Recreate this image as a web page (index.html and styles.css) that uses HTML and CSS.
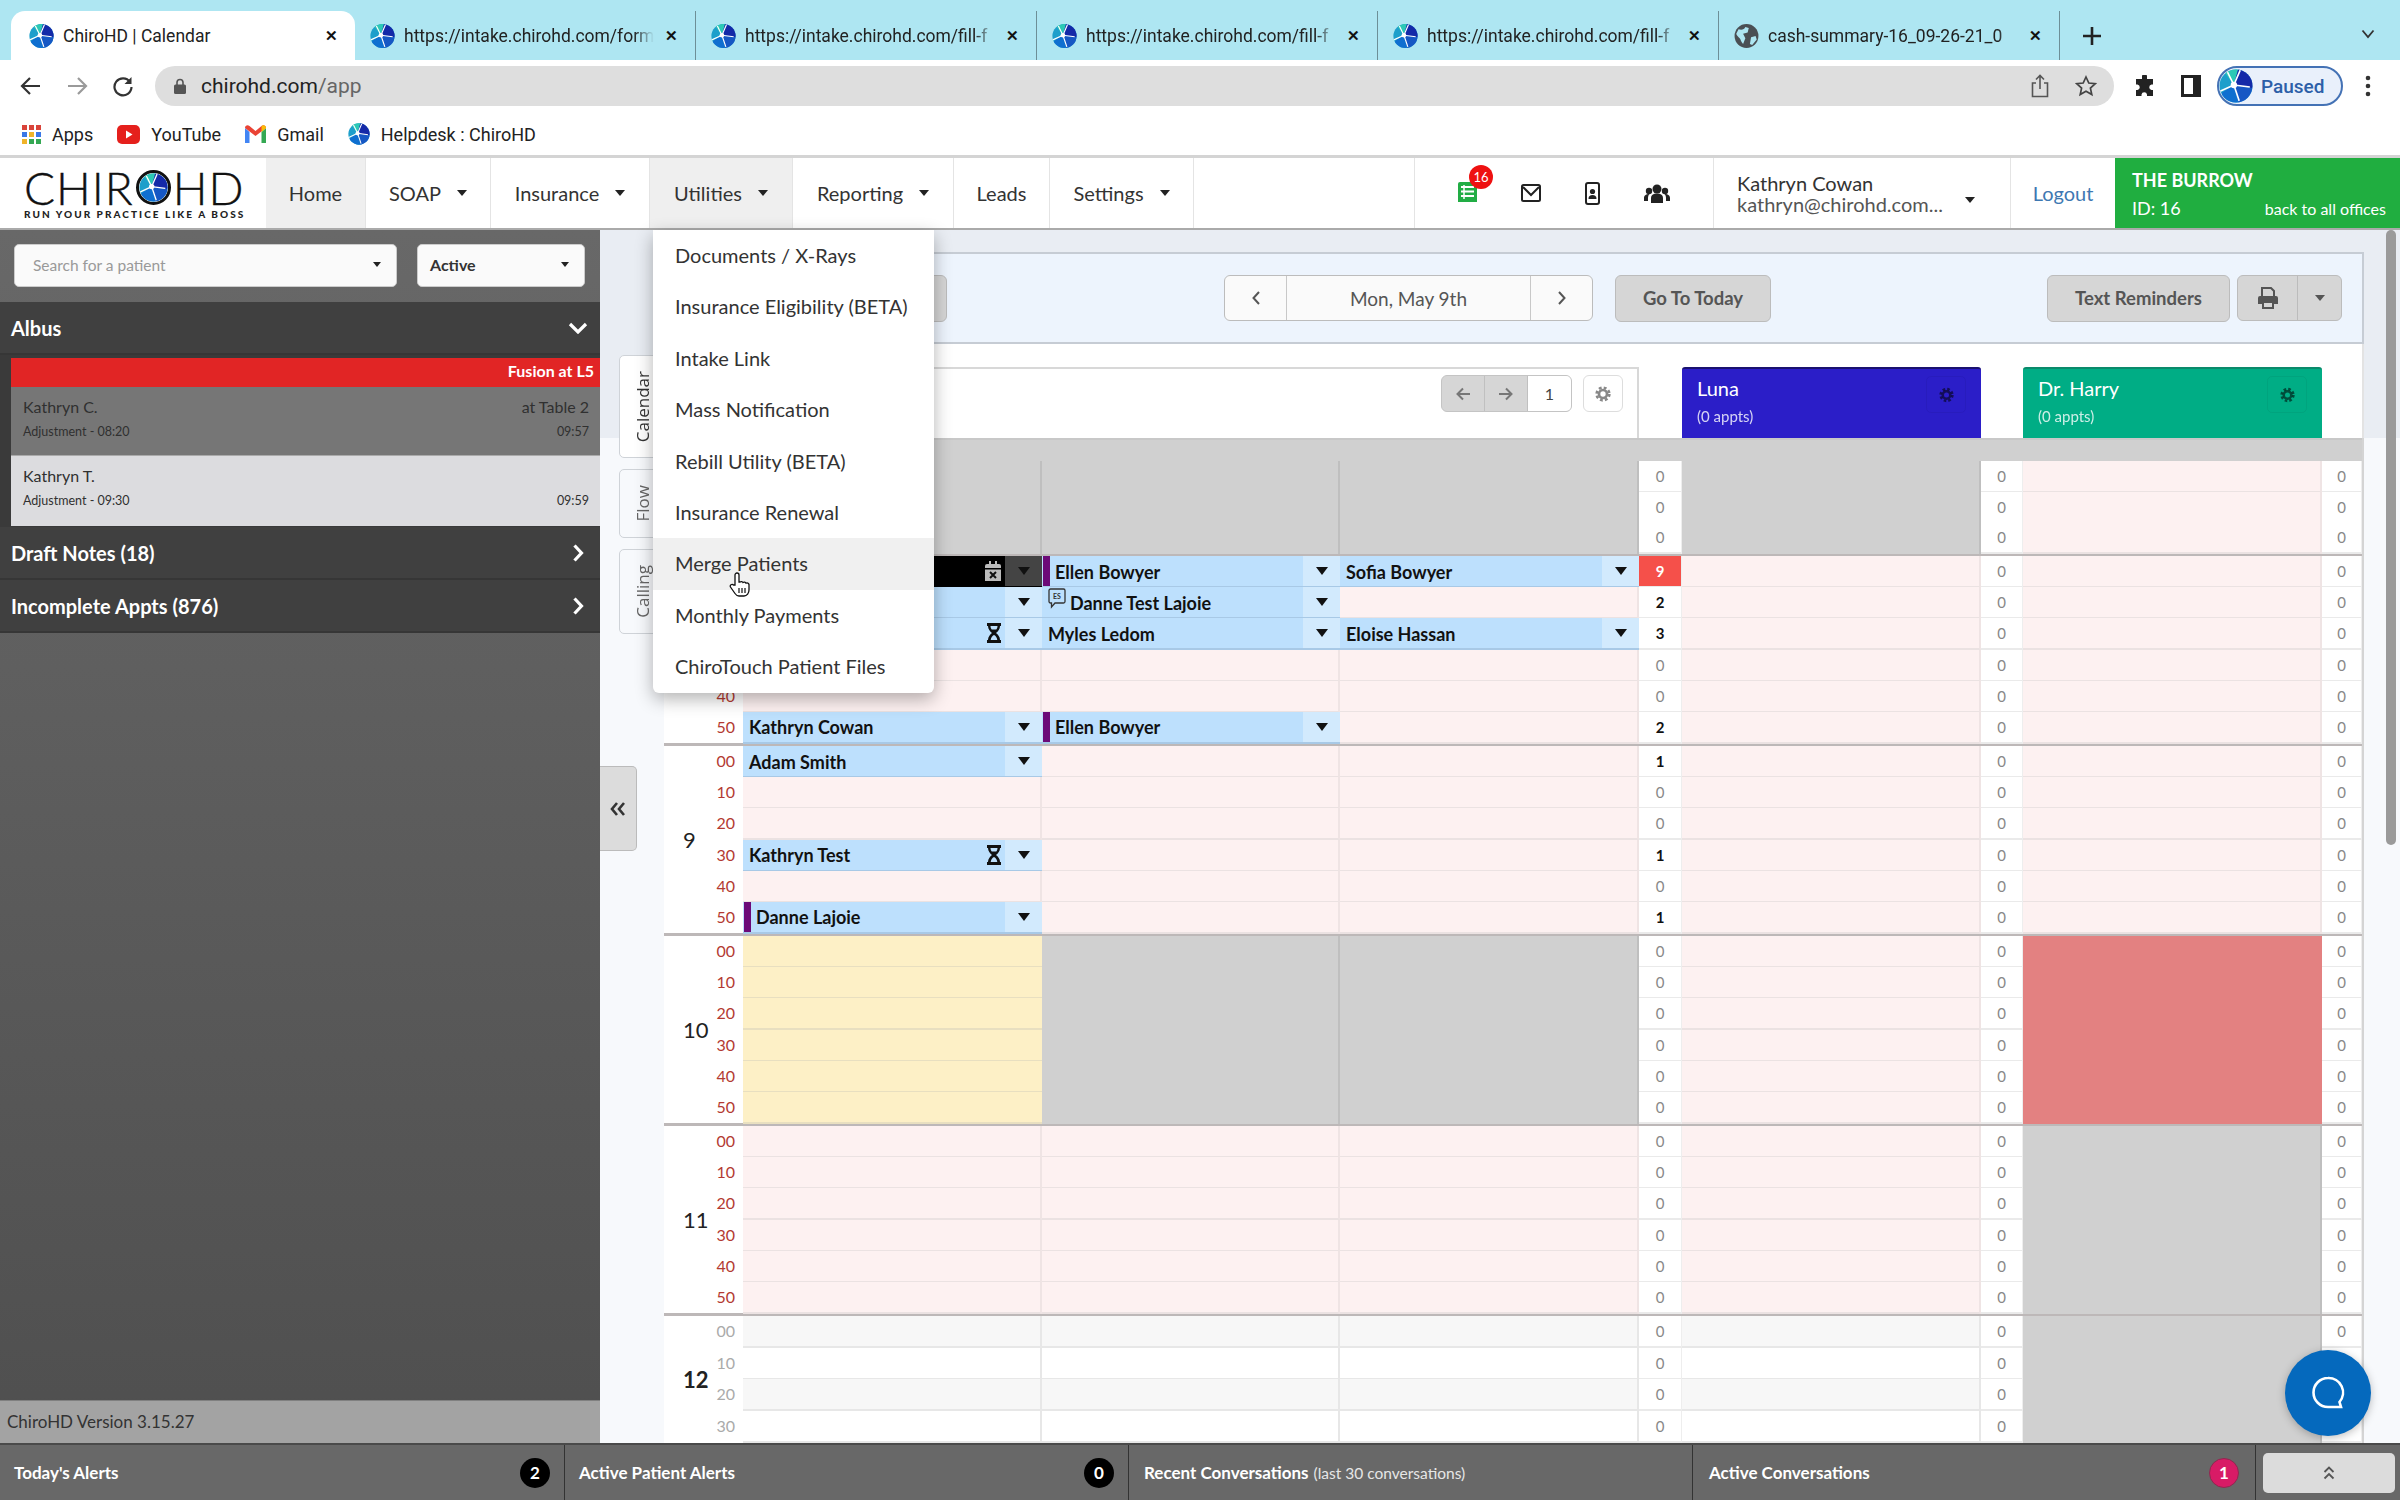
FILE: index.html
```html
<!DOCTYPE html>
<html lang="en">
<head>
    <meta charset="UTF-8">
    <title>ChiroHD | Calendar</title>
    <link rel="stylesheet" href="styles.css">
</head>
<body>
    <!-- shared icons -->
    <svg class="defs" width="0" height="0">
        <defs>
            <clipPath id="disc"><circle cx="16" cy="16" r="15.5"/></clipPath>
            <symbol id="logo" viewBox="0 0 32 32">
                <g clip-path="url(#disc)">
                    <rect width="32" height="32" fill="#1d9fcb"/>
                    <polygon points="14,15 3,0 18,0" fill="#2cc9b5"/>
                    <polygon points="14,15 18,0 32,0 32,18" fill="#1429a8"/>
                    <polygon points="14,15 32,18 32,32 18,32" fill="#1657c4"/>
                    <polygon points="14,15 18,32 0,32 3,22" fill="#0f6fd0"/>
                    <path d="M14 15 8 3M14 15 20 1M14 15 29 17M14 15 19 30M14 15 1 21" stroke="#fff" stroke-width="1.500" fill="none"/>
                    <circle cx="14" cy="15" r="3" fill="#fff"/>
                </g>
            </symbol>
            <symbol id="gear" viewBox="0 0 24 24">
                <circle cx="12" cy="12" r="9.5" fill="none" stroke="currentColor" stroke-width="4" stroke-dasharray="4.2 3.26"/>
                <circle cx="12" cy="12" r="6" fill="none" stroke="currentColor" stroke-width="4"/>
            </symbol>
            <symbol id="hourglass" viewBox="0 0 14 20">
                <path d="M0 0h14v3h-1c0 3-2 5.500-4 7 2 1.500 4 4 4 7h1v3H0v-3h1c0-3 2-5.500 4-7-2-1.500-4-4-4-7H0z" fill="currentColor"/>
                <path d="M3.500 3h7c0 1.500-.5 2.500-1.200 3.500H4.700C4 5.500 3.500 4.500 3.500 3zM7 12c-1.800 1-3 2.500-3.300 5h6.600C10 14.500 8.800 13 7 12z" fill="#bde0fd"/>
            </symbol>
            <symbol id="chev-right" viewBox="0 0 12 20">
                <path d="M2.500 2.500 9.500 10l-7 7.500" fill="none" stroke="currentColor" stroke-width="3.200"/>
            </symbol>
        </defs>
    </svg>

    <div class="tabs">
        <div class="tab active">
            <svg class="fav"><use href="#logo"/></svg>
            <span class="tab-title">ChiroHD | Calendar</span>
            <span class="tab-x">&#10005;</span>
        </div>
        <div class="tab">
            <svg class="fav"><use href="#logo"/></svg>
            <span class="tab-title">https://intake.chirohd.com/form</span>
            <span class="tab-x">&#10005;</span>
        </div>
        <div class="tab">
            <svg class="fav"><use href="#logo"/></svg>
            <span class="tab-title">https://intake.chirohd.com/fill-f</span>
            <span class="tab-x">&#10005;</span>
        </div>
        <div class="tab">
            <svg class="fav"><use href="#logo"/></svg>
            <span class="tab-title">https://intake.chirohd.com/fill-f</span>
            <span class="tab-x">&#10005;</span>
        </div>
        <div class="tab">
            <svg class="fav"><use href="#logo"/></svg>
            <span class="tab-title">https://intake.chirohd.com/fill-f</span>
            <span class="tab-x">&#10005;</span>
        </div>
        <div class="tab">
            <svg class="fav" viewBox="0 0 22 22">
                <circle cx="11" cy="11" r="10.500" fill="#4a4f54"/>
                <path d="M4 5c3 1 5 0 6-2l3 1-1 4-4 1 2 4-2 5c-2-2-2-4-3-5S2 10 2 9zM15 12l4-1 1 3-4 5-2-1z" fill="#aee6f2"/>
            </svg>
            <span class="tab-title">cash-summary-16_09-26-21_0</span>
            <span class="tab-x">&#10005;</span>
        </div>
        <svg class="new-tab" width="22" height="22" viewBox="0 0 22 22"><path d="M11 2v18M2 11h18" stroke="#222" stroke-width="2.600"/></svg>
        <svg class="tab-list" width="14" height="10" viewBox="0 0 14 10"><path d="M1.500 1.500 7 8l5.500-6.500" fill="none" stroke="#333" stroke-width="1.800"/></svg>
    </div>

    <div class="toolbar">
        <svg class="tool-btn" width="22" height="22" viewBox="0 0 22 22"><path d="M20 11H3M10 3l-8 8 8 8" fill="none" stroke="#333" stroke-width="2.200"/></svg>
        <svg class="tool-btn" width="22" height="22" viewBox="0 0 22 22"><path d="M2 11h17M12 3l8 8-8 8" fill="none" stroke="#9a9a9a" stroke-width="2.200"/></svg>
        <svg class="tool-btn" width="22" height="22" viewBox="0 0 22 22"><path d="M18 7A8.500 8.500 0 1 0 19.500 12" fill="none" stroke="#333" stroke-width="2.200"/><path d="M19.500 2v7h-7z" fill="#333"/></svg>
        <div class="omnibox">
            <svg width="12" height="16" viewBox="0 0 12 16"><path d="M3 7V4.500a3 3 0 0 1 6 0V7" fill="none" stroke="#555" stroke-width="1.600"/><rect y="6.500" width="12" height="9.500" rx="1.500" fill="#555"/></svg>
            <span class="url">chirohd.com<span class="url-path">/app</span></span>
            <svg class="omni-share" width="18" height="24" viewBox="0 0 18 24"><path d="M5 9H1.500v13.500h15V9H13M9 15V2M5 5.500 9 1.500l4 4" fill="none" stroke="#555" stroke-width="1.600"/></svg>
            <svg class="omni-star" width="22" height="22" viewBox="0 0 22 22"><path d="m11 2 2.800 6 6.500.7-4.900 4.400 1.400 6.400L11 16.200l-5.800 3.300 1.400-6.400L1.700 8.700 8.200 8z" fill="none" stroke="#444" stroke-width="1.700"/></svg>
        </div>
        <svg class="puzzle" width="22" height="22" viewBox="0 0 22 22"><path d="M8 1.500a2.500 2.500 0 0 1 5 0V4h6v5.500h-1.500a2.800 2.800 0 0 0 0 5.500H19v6h-6v-1.500a2.800 2.800 0 0 0-5.500 0V21H2v-6h1.500a2.800 2.800 0 0 0 0-5.500H2V4h6z" fill="#222"/></svg>
        <svg class="panel-icon" width="20" height="22" viewBox="0 0 20 22"><rect x="1.500" y="1.500" width="17" height="19" fill="none" stroke="#222" stroke-width="3"/><rect x="12" y="2" width="6" height="18" fill="#222"/></svg>
        <div class="paused">
            <svg class="paused-logo"><use href="#logo"/></svg>
            <span>Paused</span>
        </div>
        <svg class="kebab" width="6" height="22" viewBox="0 0 6 22"><circle cx="3" cy="3" r="2.300" fill="#333"/><circle cx="3" cy="11" r="2.300" fill="#333"/><circle cx="3" cy="19" r="2.300" fill="#333"/></svg>
    </div>

    <div class="bookmarks">
        <div class="bm">
            <svg width="19" height="19" viewBox="0 0 19 19">
                <rect width="5" height="5" fill="#d9443a"/><rect x="7" width="5" height="5" fill="#d9443a"/><rect x="14" width="5" height="5" fill="#d9443a"/>
                <rect y="7" width="5" height="5" fill="#3b78e7"/><rect x="7" y="7" width="5" height="5" fill="#f0b429"/><rect x="14" y="7" width="5" height="5" fill="#3b78e7"/>
                <rect y="14" width="5" height="5" fill="#f0b429"/><rect x="7" y="14" width="5" height="5" fill="#34a853"/><rect x="14" y="14" width="5" height="5" fill="#34a853"/>
            </svg>
            <span>Apps</span>
        </div>
        <div class="bm">
            <svg width="23" height="19" viewBox="0 0 23 19"><rect width="23" height="19" rx="5" fill="#e5201c"/><path d="m9 5.500 6.500 4-6.500 4z" fill="#fff"/></svg>
            <span>YouTube</span>
        </div>
        <div class="bm">
            <svg width="21" height="18" viewBox="0 0 21 18">
                <path d="M0 3v15h4.500V7z" fill="#4285f4"/><path d="M21 3v15h-4.500V7z" fill="#34a853"/>
                <path d="M0 3c0-3 3-3.500 4.500-2L10.500 6l6-5c1.500-1.500 4.500-1 4.500 2l-10.500 8z" fill="#ea4335"/>
                <path d="M16.500 1c1.500-1.500 4.500-1 4.500 2l-4.500 4z" fill="#fbbc04"/>
            </svg>
            <span>Gmail</span>
        </div>
        <div class="bm">
            <svg class="bm-logo"><use href="#logo"/></svg>
            <span>Helpdesk : ChiroHD</span>
        </div>
    </div>

    <nav class="nav">
        <div class="brand">
            <div class="brand-name">CHIR<svg class="brand-o"><use href="#logo"/></svg>HD</div>
            <div class="brand-tag">RUN YOUR PRACTICE LIKE A BOSS</div>
        </div>
        <div class="nav-item nav-home shaded">Home</div>
        <div class="nav-item nav-soap">SOAP <i class="caret"></i></div>
        <div class="nav-item nav-ins">Insurance <i class="caret"></i></div>
        <div class="nav-item nav-util shaded">Utilities <i class="caret"></i></div>
        <div class="nav-item nav-rep">Reporting <i class="caret"></i></div>
        <div class="nav-item nav-leads">Leads</div>
        <div class="nav-item nav-set">Settings <i class="caret"></i></div>
        <div class="nav-icons">
            <div class="sheet">
                <svg width="19" height="20" viewBox="0 0 19 20"><path d="M0 2a2 2 0 0 1 2-2h15a2 2 0 0 1 2 2v18H0z" fill="#22ad45"/><path d="M3 5h13M3 9.500h13M3 14h13" stroke="#fff" stroke-width="1.800"/><path d="M6 3v14" stroke="#fff" stroke-width="1.500"/></svg>
                <span class="sheet-count">16</span>
            </div>
            <svg width="20" height="18" viewBox="0 0 20 18"><rect x="1" y="1" width="18" height="16" rx="1.500" fill="none" stroke="#222" stroke-width="2"/><path d="m2 3 8 8 8-8" fill="none" stroke="#222" stroke-width="2"/></svg>
            <svg width="15" height="23" viewBox="0 0 15 23"><rect x="1" y="1" width="13" height="21" rx="2" fill="none" stroke="#222" stroke-width="2"/><circle cx="7.500" cy="9.500" r="2.600" fill="#222"/><path d="M3.500 17c0-3 1.500-4 4-4s4 1 4 4z" fill="#222"/></svg>
            <svg width="26" height="20" viewBox="0 0 26 20"><circle cx="13" cy="6" r="4.500" fill="#222"/><circle cx="5" cy="8" r="3.200" fill="#222"/><circle cx="21" cy="8" r="3.200" fill="#222"/><path d="M7 20v-5c0-3 2-4.500 6-4.500s6 1.500 6 4.500v5zM0 18v-3c0-2 1.500-4 5.500-4-1 1-1.500 2.500-1.500 4v3zM26 18v-3c0-2-1.500-4-5.500-4 1 1 1.500 2.500 1.500 4v3z" fill="#222"/></svg>
        </div>
        <div class="nav-user">
            <div>
                <div class="user-name">Kathryn Cowan</div>
                <div class="user-mail">kathryn@chirohd.com...</div>
            </div>
            <i class="caret"></i>
        </div>
        <div class="nav-logout">Logout</div>
        <div class="office">
            <div class="office-name">THE BURROW</div>
            <div class="office-row"><span>ID: 16</span><span class="office-back">back to all offices</span></div>
        </div>
    </nav>

    <div class="workspace">
        <aside class="sidebar">
            <div class="side-search">
                <div class="select select-search">Search for a patient <i class="caret small"></i></div>
                <div class="select select-status">Active <i class="caret small"></i></div>
            </div>
            <div class="side-head">Albus <svg class="chev-down" width="20" height="12" viewBox="0 0 20 12"><path d="M2 2l8 8 8-8" fill="none" stroke="#fff" stroke-width="3.200"/></svg></div>
            <div class="side-list">
                <div class="flag">Fusion at L5</div>
                <div class="pt pt-dark">
                    <div class="pt-line"><span class="pt-name">Kathryn C.</span><span class="pt-name">at Table 2</span></div>
                    <div class="pt-line"><span class="pt-sub">Adjustment - 08:20</span><span class="pt-sub">09:57</span></div>
                </div>
                <div class="pt pt-light">
                    <div class="pt-line"><span class="pt-name">Kathryn T.</span></div>
                    <div class="pt-line"><span class="pt-sub">Adjustment - 09:30</span><span class="pt-sub">09:59</span></div>
                </div>
            </div>
            <div class="side-head">Draft Notes (18) <svg class="chev" width="12" height="20"><use href="#chev-right"/></svg></div>
            <div class="side-head">Incomplete Appts (876) <svg class="chev" width="12" height="20"><use href="#chev-right"/></svg></div>
            <div class="side-fill"></div>
            <div class="version">ChiroHD Version 3.15.27</div>
        </aside>

        <main class="main">
            <div class="rail">
                <div class="rail-tab rail-cal"><span>Calendar</span></div>
                <div class="rail-tab rail-flow"><span>Flow</span></div>
                <div class="rail-tab rail-call"><span>Calling</span></div>
                <div class="collapse">
                    <svg width="16" height="14" viewBox="0 0 16 14"><path d="M7 1 2 7l5 6M14 1 9 7l5 6" fill="none" stroke="#333" stroke-width="2.600"/></svg>
                </div>
            </div>

            <div class="cal">
                <div class="cal-bar">
                    <div class="btn btn-hidden"></div>
                    <div class="date-nav">
                        <div class="date-arrow"><svg width="8" height="14" viewBox="0 0 8 14"><path d="M7 1 1.500 7 7 13" fill="none" stroke="#555" stroke-width="2"/></svg></div>
                        <div class="date-text">Mon, May 9th</div>
                        <div class="date-arrow"><svg width="8" height="14" viewBox="0 0 8 14"><path d="M1 1l5.500 6L1 13" fill="none" stroke="#555" stroke-width="2"/></svg></div>
                    </div>
                    <div class="btn btn-today">Go To Today</div>
                    <div class="btn btn-text">Text Reminders</div>
                    <div class="print-group">
                        <div class="print-main">
                            <svg width="20" height="22" viewBox="0 0 20 22"><path d="M4 9V1h9l3 3v5" fill="none" stroke="#555" stroke-width="2"/><path d="M0 11a2 2 0 0 1 2-2h16a2 2 0 0 1 2 2v6h-4v-3H4v3H0z" fill="#555"/><rect x="5" y="15" width="10" height="6" fill="none" stroke="#555" stroke-width="2"/></svg>
                        </div>
                        <div class="print-drop"><i class="caret grey"></i></div>
                    </div>
                </div>

                <div class="cal-head">
                    <div class="head-main">
                        <div class="head-tools">
                            <div class="pager">
                                <div class="pager-btn"><svg width="14" height="14" viewBox="0 0 14 14"><path d="M14 7H2M7 1.500 1.500 7 7 12.500" fill="none" stroke="#777" stroke-width="2"/></svg></div>
                                <div class="pager-btn"><svg width="14" height="14" viewBox="0 0 14 14"><path d="M0 7h12M7 1.500 12.500 7 7 12.500" fill="none" stroke="#777" stroke-width="2"/></svg></div>
                                <div class="pager-num">1</div>
                            </div>
                            <div class="head-gear"><svg width="16" height="16"><use href="#gear"/></svg></div>
                        </div>
                    </div>
                    <div class="head-gap"></div>
                    <div class="provider luna">
                        <div class="prov-name">Luna</div>
                        <div class="prov-sub">(0 appts)</div>
                        <div class="prov-gear"><svg width="15" height="16"><use href="#gear"/></svg></div>
                    </div>
                    <div class="head-gap narrow"></div>
                    <div class="provider harry">
                        <div class="prov-name">Dr. Harry</div>
                        <div class="prov-sub">(0 appts)</div>
                        <div class="prov-gear"><svg width="15" height="16"><use href="#gear"/></svg></div>
                    </div>
                </div>

                <div class="grid">
                    <div class="spacer"></div>

                    <div class="hour h3">
                        <div class="hour-num"></div>
                        <div class="rows">
                            <div class="row"><span class="min"></span><div class="cell off"></div><div class="cell off"></div><div class="cell off"></div><div class="n">0</div><div class="cell off"></div><div class="n">0</div><div class="cell"></div><div class="n">0</div></div>
                            <div class="row"><span class="min"></span><div class="cell off"></div><div class="cell off"></div><div class="cell off"></div><div class="n">0</div><div class="cell off"></div><div class="n">0</div><div class="cell"></div><div class="n">0</div></div>
                            <div class="row"><span class="min"></span><div class="cell off"></div><div class="cell off"></div><div class="cell off"></div><div class="n">0</div><div class="cell off"></div><div class="n">0</div><div class="cell"></div><div class="n">0</div></div>
                        </div>
                    </div>

                    <div class="hour">
                        <div class="hour-num"></div>
                        <div class="rows">
                            <div class="row"><span class="min"></span>
                                <div class="cell appt black"><span class="name"></span>
                                    <svg class="flag-icon" width="16" height="20" viewBox="0 0 16 20"><path d="M0 5a2 2 0 0 1 2-2h2V0h2v3h4V0h2v3h2a2 2 0 0 1 2 2v2H0zM0 8.500h16V20H0z" fill="#bbb"/><path d="m5 11 6 6M11 11l-6 6" stroke="#111" stroke-width="2"/></svg>
                                    <div class="drop"><i class="caret black-c"></i></div></div>
                                <div class="cell appt"><i class="bar"></i><span class="name">Ellen Bowyer</span><div class="drop"><i class="caret"></i></div></div>
                                <div class="cell appt"><span class="name">Sofia Bowyer</span><div class="drop"><i class="caret"></i></div></div>
                                <div class="n hot">9</div><div class="cell"></div><div class="n">0</div><div class="cell"></div><div class="n">0</div></div>
                            <div class="row"><span class="min"></span>
                                <div class="cell appt"><span class="name"></span><div class="drop"><i class="caret"></i></div></div>
                                <div class="cell appt">
                                    <svg class="es-icon" width="18" height="22" viewBox="0 0 18 22"><path d="M2.500 1h13A1.500 1.500 0 0 1 17 2.500v11a1.500 1.500 0 0 1-1.500 1.500H7l-3.500 4v-4h-1A1.500 1.500 0 0 1 1 13.500v-11A1.500 1.500 0 0 1 2.500 1z" fill="none" stroke="#333" stroke-width="1.300"/><text x="9" y="10.500" font-size="7" font-weight="700" text-anchor="middle" fill="#333" font-family="Lato">ES</text></svg>
                                    <span class="name">Danne Test Lajoie</span><div class="drop"><i class="caret"></i></div></div>
                                <div class="cell"></div>
                                <div class="n on">2</div><div class="cell"></div><div class="n">0</div><div class="cell"></div><div class="n">0</div></div>
                            <div class="row"><span class="min"></span>
                                <div class="cell appt"><span class="name"></span><svg class="flag-icon" width="14" height="20"><use href="#hourglass"/></svg><div class="drop"><i class="caret"></i></div></div>
                                <div class="cell appt"><span class="name">Myles Ledom</span><div class="drop"><i class="caret"></i></div></div>
                                <div class="cell appt"><span class="name">Eloise Hassan</span><div class="drop"><i class="caret"></i></div></div>
                                <div class="n on">3</div><div class="cell"></div><div class="n">0</div><div class="cell"></div><div class="n">0</div></div>
                            <div class="row"><span class="min"></span><div class="cell"></div><div class="cell"></div><div class="cell"></div><div class="n">0</div><div class="cell"></div><div class="n">0</div><div class="cell"></div><div class="n">0</div></div>
                            <div class="row"><span class="min">40</span><div class="cell"></div><div class="cell"></div><div class="cell"></div><div class="n">0</div><div class="cell"></div><div class="n">0</div><div class="cell"></div><div class="n">0</div></div>
                            <div class="row"><span class="min">50</span>
                                <div class="cell appt"><span class="name">Kathryn Cowan</span><div class="drop"><i class="caret"></i></div></div>
                                <div class="cell appt"><i class="bar"></i><span class="name">Ellen Bowyer</span><div class="drop"><i class="caret"></i></div></div>
                                <div class="cell"></div>
                                <div class="n on">2</div><div class="cell"></div><div class="n">0</div><div class="cell"></div><div class="n">0</div></div>
                        </div>
                    </div>

                    <div class="hour">
                        <div class="hour-num">9</div>
                        <div class="rows">
                            <div class="row"><span class="min">00</span>
                                <div class="cell appt"><span class="name">Adam Smith</span><div class="drop"><i class="caret"></i></div></div>
                                <div class="cell"></div><div class="cell"></div>
                                <div class="n on">1</div><div class="cell"></div><div class="n">0</div><div class="cell"></div><div class="n">0</div></div>
                            <div class="row"><span class="min">10</span><div class="cell"></div><div class="cell"></div><div class="cell"></div><div class="n">0</div><div class="cell"></div><div class="n">0</div><div class="cell"></div><div class="n">0</div></div>
                            <div class="row"><span class="min">20</span><div class="cell"></div><div class="cell"></div><div class="cell"></div><div class="n">0</div><div class="cell"></div><div class="n">0</div><div class="cell"></div><div class="n">0</div></div>
                            <div class="row"><span class="min">30</span>
                                <div class="cell appt"><span class="name">Kathryn Test</span><svg class="flag-icon" width="14" height="20"><use href="#hourglass"/></svg><div class="drop"><i class="caret"></i></div></div>
                                <div class="cell"></div><div class="cell"></div>
                                <div class="n on">1</div><div class="cell"></div><div class="n">0</div><div class="cell"></div><div class="n">0</div></div>
                            <div class="row"><span class="min">40</span><div class="cell"></div><div class="cell"></div><div class="cell"></div><div class="n">0</div><div class="cell"></div><div class="n">0</div><div class="cell"></div><div class="n">0</div></div>
                            <div class="row"><span class="min">50</span>
                                <div class="cell appt"><i class="bar"></i><span class="name">Danne Lajoie</span><div class="drop"><i class="caret"></i></div></div>
                                <div class="cell"></div><div class="cell"></div>
                                <div class="n on">1</div><div class="cell"></div><div class="n">0</div><div class="cell"></div><div class="n">0</div></div>
                        </div>
                    </div>

                    <div class="hour">
                        <div class="hour-num">10</div>
                        <div class="rows">
                            <div class="row"><span class="min">00</span><div class="cell held"></div><div class="cell off"></div><div class="cell off"></div><div class="n">0</div><div class="cell"></div><div class="n">0</div><div class="cell blocked"></div><div class="n">0</div></div>
                            <div class="row"><span class="min">10</span><div class="cell held"></div><div class="cell off"></div><div class="cell off"></div><div class="n">0</div><div class="cell"></div><div class="n">0</div><div class="cell blocked"></div><div class="n">0</div></div>
                            <div class="row"><span class="min">20</span><div class="cell held"></div><div class="cell off"></div><div class="cell off"></div><div class="n">0</div><div class="cell"></div><div class="n">0</div><div class="cell blocked"></div><div class="n">0</div></div>
                            <div class="row"><span class="min">30</span><div class="cell held"></div><div class="cell off"></div><div class="cell off"></div><div class="n">0</div><div class="cell"></div><div class="n">0</div><div class="cell blocked"></div><div class="n">0</div></div>
                            <div class="row"><span class="min">40</span><div class="cell held"></div><div class="cell off"></div><div class="cell off"></div><div class="n">0</div><div class="cell"></div><div class="n">0</div><div class="cell blocked"></div><div class="n">0</div></div>
                            <div class="row"><span class="min">50</span><div class="cell held"></div><div class="cell off"></div><div class="cell off"></div><div class="n">0</div><div class="cell"></div><div class="n">0</div><div class="cell blocked"></div><div class="n">0</div></div>
                        </div>
                    </div>

                    <div class="hour">
                        <div class="hour-num">11</div>
                        <div class="rows">
                            <div class="row"><span class="min">00</span><div class="cell"></div><div class="cell"></div><div class="cell"></div><div class="n">0</div><div class="cell"></div><div class="n">0</div><div class="cell off"></div><div class="n">0</div></div>
                            <div class="row"><span class="min">10</span><div class="cell"></div><div class="cell"></div><div class="cell"></div><div class="n">0</div><div class="cell"></div><div class="n">0</div><div class="cell off"></div><div class="n">0</div></div>
                            <div class="row"><span class="min">20</span><div class="cell"></div><div class="cell"></div><div class="cell"></div><div class="n">0</div><div class="cell"></div><div class="n">0</div><div class="cell off"></div><div class="n">0</div></div>
                            <div class="row"><span class="min">30</span><div class="cell"></div><div class="cell"></div><div class="cell"></div><div class="n">0</div><div class="cell"></div><div class="n">0</div><div class="cell off"></div><div class="n">0</div></div>
                            <div class="row"><span class="min">40</span><div class="cell"></div><div class="cell"></div><div class="cell"></div><div class="n">0</div><div class="cell"></div><div class="n">0</div><div class="cell off"></div><div class="n">0</div></div>
                            <div class="row"><span class="min">50</span><div class="cell"></div><div class="cell"></div><div class="cell"></div><div class="n">0</div><div class="cell"></div><div class="n">0</div><div class="cell off"></div><div class="n">0</div></div>
                        </div>
                    </div>

                    <div class="hour lunch">
                        <div class="hour-num">12</div>
                        <div class="rows">
                            <div class="row"><span class="min">00</span><div class="cell alt"></div><div class="cell alt"></div><div class="cell alt"></div><div class="n">0</div><div class="cell alt"></div><div class="n">0</div><div class="cell off"></div><div class="n">0</div></div>
                            <div class="row"><span class="min">10</span><div class="cell plain"></div><div class="cell plain"></div><div class="cell plain"></div><div class="n">0</div><div class="cell plain"></div><div class="n">0</div><div class="cell off"></div><div class="n">0</div></div>
                            <div class="row"><span class="min">20</span><div class="cell alt"></div><div class="cell alt"></div><div class="cell alt"></div><div class="n">0</div><div class="cell alt"></div><div class="n">0</div><div class="cell off"></div><div class="n">0</div></div>
                            <div class="row"><span class="min">30</span><div class="cell plain"></div><div class="cell plain"></div><div class="cell plain"></div><div class="n">0</div><div class="cell plain"></div><div class="n">0</div><div class="cell off"></div><div class="n">0</div></div>
                        </div>
                    </div>
                </div>
            </div>

            <div class="scrollbar"><div class="thumb"></div></div>
        </main>

        <!-- Utilities menu, open over the calendar -->
        <ul class="menu">
            <li>Documents / X-Rays</li>
            <li>Insurance Eligibility (BETA)</li>
            <li>Intake Link</li>
            <li>Mass Notification</li>
            <li>Rebill Utility (BETA)</li>
            <li>Insurance Renewal</li>
            <li class="hover">Merge Patients</li>
            <li>Monthly Payments</li>
            <li>ChiroTouch Patient Files</li>
        </ul>
        <svg class="pointer" width="22" height="25" viewBox="0 0 22 25">
            <path d="M6 13V3a2 2 0 0 1 4 0v7l1 0a2 2 0 0 1 3 .5 2 2 0 0 1 3 .7 2 2 0 0 1 3 1.300V18c0 3-2 6-5 6H10c-2 0-3-1-4-2.500L1.500 15c-1-2 1.500-3.500 3-2z" fill="#fff" stroke="#111" stroke-width="1.300"/>
            <path d="M10 16v5M13 16v5M16 16v5" stroke="#111" stroke-width="1.200"/>
        </svg>

        <div class="chat">
            <svg width="36" height="36" viewBox="0 0 36 36"><path d="M18 3a14.500 14.500 0 1 0 0 29h13l-1.500-5A14.500 14.500 0 0 0 18 3z" fill="none" stroke="#fff" stroke-width="2.600"/></svg>
        </div>
    </div>

    <footer class="alerts">
        <div class="alert a-one"><span class="alert-title">Today's Alerts</span><span class="count dark">2</span></div>
        <div class="alert a-two"><span class="alert-title">Active Patient Alerts</span><span class="count dark">0</span></div>
        <div class="alert a-three"><span class="alert-title">Recent Conversations</span> <span class="alert-note">(last 30 conversations)</span></div>
        <div class="alert a-four"><span class="alert-title">Active Conversations</span><span class="count pink">1</span></div>
        <div class="alert-up">
            <div class="up-btn"><svg width="12" height="14" viewBox="0 0 12 14"><path d="M1.500 6 6 1.500 10.500 6M1.500 12.500 6 8l4.500 4.500" fill="none" stroke="#555" stroke-width="1.800"/></svg></div>
        </div>
    </footer>
</body>
</html>
```

FILE: styles.css
```css
* {
    margin: 0;
    padding: 0;
    box-sizing: border-box;
}

html, body {
    height: 1500px;
    overflow: hidden;
}

body {
    display: flex;
    flex-direction: column;
    font-family: "Lato", "Liberation Sans", sans-serif;
    color: #333;
    background: #fff;
}

.defs {
    position: absolute;
}

.caret {
    display: inline-block;
    width: 0;
    height: 0;
    border-left: 5px solid transparent;
    border-right: 5px solid transparent;
    border-top: 6px solid #222;
}

.caret.small {
    border-left-width: 4px;
    border-right-width: 4px;
    border-top-width: 5px;
}

.caret.grey {
    border-top-color: #555;
}

/* browser chrome */
.tabs {
    height: 60px;
    flex: none;
    background: #aee6f2;
    display: flex;
    align-items: flex-end;
    padding-left: 11px;
    position: relative;
}

.tab {
    width: 341px;
    height: 49px;
    display: flex;
    align-items: center;
    padding: 0 17px 0 15px;
    border-right: 1px solid #6d8f97;
    background-clip: content-box;
    font-family: "Roboto", "Liberation Sans", sans-serif;
    font-size: 17.5px;
    color: #222;
    position: relative;
}

.tab.active {
    width: 344px;
    padding-left: 18px;
    background: #fff;
    border-right: none;
    border-radius: 14px 14px 0 0;
}

.fav {
    width: 25px;
    height: 26px;
    flex: none;
}

.tab-title {
    flex: 1;
    margin-left: 9px;
    white-space: nowrap;
    overflow: hidden;
    -webkit-mask-image: linear-gradient(to left, transparent 0, #000 20px);
    mask-image: linear-gradient(to left, transparent 0, #000 20px);
}

.tab.active .tab-title {
    -webkit-mask-image: none;
    mask-image: none;
}

.tab-x {
    width: 14px;
    flex: none;
    margin-left: 10px;
    font-size: 15px;
    font-weight: 700;
    color: #111;
    text-align: center;
}

.new-tab {
    margin: 0 0 13px 21px;
}

.tab-list {
    position: absolute;
    right: 25px;
    top: 29px;
}

.toolbar {
    height: 53px;
    flex: none;
    display: flex;
    align-items: center;
    padding: 0 0 1px 20px;
    background: #fff;
    font-family: "Roboto", "Liberation Sans", sans-serif;
}

.tool-btn {
    margin-right: 24px;
    flex: none;
}

.omnibox {
    width: 1959px;
    height: 40px;
    margin-left: -3px;
    flex: none;
    display: flex;
    align-items: center;
    padding: 0 17px 0 19px;
    border-radius: 20px;
    background: #dedede;
}

.url {
    margin-left: 15px;
    font-size: 21px;
    color: #222;
    flex: 1;
}

.url-path {
    color: #666;
}

.omni-star {
    margin-left: 26px;
}

.puzzle {
    margin-left: 20px;
}

.panel-icon {
    margin-left: 25px;
}

.paused {
    width: 126px;
    height: 40px;
    margin-left: 16px;
    display: flex;
    align-items: center;
    border: 2px solid #4472b5;
    border-radius: 20px;
    background: #e9f0fb;
    color: #2d5fa8;
    font-size: 19px;
    font-weight: 500;
}

.paused-logo {
    width: 34px;
    height: 36px;
    margin-right: 8px;
}

.kebab {
    margin-left: 22px;
}

.bookmarks {
    height: 45px;
    flex: none;
    display: flex;
    align-items: center;
    padding-left: 22px;
    gap: 24px;
    font-family: "Roboto", "Liberation Sans", sans-serif;
    font-size: 18px;
    color: #222;
    border-bottom: 3px solid #d4d4d4;
}

.bm {
    display: flex;
    align-items: center;
    gap: 11px;
}

.bm-logo {
    width: 22px;
    height: 26px;
}

/* app nav */
.nav {
    height: 72px;
    flex: none;
    display: flex;
    border-bottom: 2px solid #aaa;
    background: #fff;
    font-size: 20px;
}

.brand {
    width: 266px;
    flex: none;
    padding: 11px 0 0 24px;
    color: #111;
}

.brand-name {
    height: 37px;
    display: flex;
    align-items: center;
    font-size: 46px;
    font-weight: 300;
    line-height: 37px;
    letter-spacing: 1px;
    -webkit-text-stroke: .4px #111;
}

.brand-o {
    width: 35px;
    height: 35px;
    border: 3px solid #111;
    border-radius: 50%;
    margin: 0 2px;
    flex: none;
}

.brand-tag {
    margin-top: 2px;
    font-size: 10px;
    font-weight: 900;
    letter-spacing: 2.05px;
    white-space: nowrap;
    color: #222;
}

.nav-item {
    display: flex;
    align-items: center;
    justify-content: center;
    gap: 16px;
    border-right: 1px solid #e4e4e4;
    flex: none;
}

.nav-item.shaded {
    background: #efefef;
}

.nav-home { width: 100px; }
.nav-soap { width: 125px; }
.nav-ins { width: 159px; }
.nav-util { width: 143px; }
.nav-rep { width: 161px; }
.nav-leads { width: 96px; }
.nav-set { width: 144px; }

.nav-icons {
    margin-left: 220px;
    width: 300px;
    flex: none;
    display: flex;
    align-items: center;
    gap: 44px;
    padding-left: 43px;
    border-left: 1px solid #e4e4e4;
    border-right: 1px solid #e4e4e4;
}

.sheet {
    position: relative;
    height: 20px;
    margin-top: -2px;
}

.sheet-count {
    position: absolute;
    left: 11px;
    top: -17px;
    width: 24px;
    height: 24px;
    border-radius: 50%;
    background: #ee1111;
    color: #fff;
    font-size: 13px;
    line-height: 24px;
    text-align: center;
}

.nav-user {
    width: 297px;
    flex: none;
    display: flex;
    align-items: center;
    justify-content: space-between;
    padding: 0 35px 0 23px;
    border-right: 1px solid #e4e4e4;
}

.user-name {
    font-size: 20px;
    line-height: 22px;
    color: #333;
}

.user-mail {
    font-size: 20px;
    line-height: 21px;
    color: #555;
}

.nav-user .caret {
    margin-top: 14px;
}

.nav-logout {
    width: 104px;
    flex: none;
    display: flex;
    align-items: center;
    justify-content: center;
    color: #3e78b2;
}

.office {
    flex: 1;
    padding: 10px 14px 0 17px;
    background: #20ae40;
    color: #fff;
}

.office-name {
    font-size: 18px;
    font-weight: 700;
    line-height: 24px;
}

.office-row {
    margin-top: 5px;
    display: flex;
    justify-content: space-between;
    align-items: baseline;
    font-size: 18px;
}

.office-back {
    font-size: 16px;
}

/* workspace */
.workspace {
    flex: 1;
    min-height: 0;
    display: flex;
    position: relative;
}

.sidebar {
    width: 600px;
    flex: none;
    display: flex;
    flex-direction: column;
    background: linear-gradient(#686868, #4f4f4f);
}

.side-search {
    height: 72px;
    flex: none;
    display: flex;
    gap: 20px;
    padding: 14px 15px 0 14px;
}

.select {
    height: 43px;
    display: flex;
    align-items: center;
    justify-content: space-between;
    padding: 0 15px 2px 18px;
    border: 1px solid #ccc;
    border-radius: 5px;
    background: #fafafa;
    font-size: 15.5px;
}

.select-search {
    width: 383px;
    color: #999;
}

.select-status {
    width: 168px;
    padding-left: 12px;
    font-weight: 700;
    font-size: 16px;
    color: #333;
}

.side-head {
    height: 53px;
    flex: none;
    display: flex;
    align-items: center;
    justify-content: space-between;
    padding: 0 16px 0 11px;
    background: #404040;
    border-bottom: 2px solid #363636;
    color: #fff;
    font-size: 20px;
    font-weight: 700;
}

.chev {
    color: #fff;
}

.chev-down {
    margin-right: -4px;
}

.side-list {
    flex: none;
    padding: 3px 0 1px 11px;
    background: #3a3a3a;
}

.flag {
    height: 29px;
    padding-right: 6px;
    background: #e12525;
    color: #fff;
    font-size: 16px;
    font-weight: 700;
    line-height: 26px;
    text-align: right;
}

.pt {
    height: 69px;
    padding: 7px 11px 0 12px;
}

.pt-dark {
    background: #767676;
    border-bottom: 1px solid #aaa;
}

.pt-light {
    height: 70px;
    background: #dcdcdf;
}

.pt-line {
    display: flex;
    justify-content: space-between;
    align-items: center;
    height: 25px;
}

.pt-name {
    font-size: 16px;
    color: #303030;
}

.pt-sub {
    font-size: 12.5px;
    color: #303030;
}

.side-fill {
    flex: 1;
}

.version {
    height: 43px;
    flex: none;
    padding-left: 7px;
    background: #a3a3a3;
    border-top: 1px solid #808080;
    color: #333;
    font-size: 17px;
    line-height: 42px;
}

/* calendar area */
.main {
    flex: 1;
    min-width: 0;
    display: flex;
    background: linear-gradient(#e9edf3 208px, #f7f9fc 208px);
}

.rail {
    width: 64px;
    flex: none;
    padding-top: 125px;
}

.rail-tab {
    margin-left: 19px;
    width: 46px;
    border: 1px solid #cfd3d8;
    border-radius: 5px 0 0 5px;
    display: flex;
    align-items: center;
    justify-content: center;
    background: #fff;
    color: #666;
    font-family: "Open Sans", "Liberation Sans", sans-serif;
    font-size: 17px;
}

.rail-tab span {
    writing-mode: vertical-rl;
    transform: rotate(180deg);
}

.rail-cal {
    height: 103px;
    color: #333;
}

.rail-flow {
    height: 69px;
    margin-top: 11px;
    background: #f7f9fc;
}

.rail-call {
    height: 85px;
    margin-top: 11px;
    background: #f7f9fc;
}

.collapse {
    width: 37px;
    height: 85px;
    margin-top: 132px;
    display: flex;
    align-items: center;
    justify-content: center;
    background: #dcdcdc;
    border: 1px solid #bbb;
    border-left: none;
    border-radius: 0 5px 5px 0;
}

.cal {
    width: 1700px;
    flex: none;
    padding-top: 22px;
    overflow: hidden;
}

.cal-bar {
    height: 92px;
    display: flex;
    align-items: center;
    background: #edf4fd;
    border: 2px solid #c6ccd4;
    border-left: none;
    font-size: 18px;
    color: #555;
}

.btn {
    height: 47px;
    display: flex;
    align-items: center;
    justify-content: center;
    background: #d6d6d6;
    border: 1px solid #bcbcbc;
    border-radius: 6px;
    font-size: 18.5px;
    font-weight: 700;
    flex: none;
}

.btn-hidden {
    width: 100px;
    margin-left: 183px;
}

.date-nav {
    width: 369px;
    height: 46px;
    margin-left: 277px;
    display: flex;
    flex: none;
    background: #fafafa;
    border: 1px solid #bcbcbc;
    border-radius: 6px;
}

.date-arrow {
    width: 61px;
    display: flex;
    align-items: center;
    justify-content: center;
}

.date-text {
    flex: 1;
    display: flex;
    align-items: center;
    justify-content: center;
    border-left: 1px solid #c8c8c8;
    border-right: 1px solid #c8c8c8;
    font-size: 19px;
}

.btn-today {
    width: 156px;
    margin-left: 22px;
}

.btn-text {
    width: 183px;
    margin-left: 276px;
}

.print-group {
    width: 105px;
    height: 46px;
    margin-left: 7px;
    display: flex;
    flex: none;
    background: #d6d6d6;
    border: 1px solid #bcbcbc;
    border-radius: 6px;
}

.print-main {
    width: 60px;
    display: flex;
    align-items: center;
    justify-content: center;
    border-right: 1px solid #bcbcbc;
}

.print-drop {
    flex: 1;
    display: flex;
    align-items: center;
    justify-content: center;
}

.cal-head {
    height: 94px;
    display: flex;
    background: #fff;
    border-right: 2px solid #e3e3e3;
}

.head-main {
    width: 975px;
    flex: none;
    padding-top: 23px;
}

.head-tools {
    height: 71px;
    display: flex;
    justify-content: flex-end;
    gap: 11px;
    padding: 6px 14px 0 0;
    border-top: 2px solid #d8d8d8;
    border-right: 2px solid #d8d8d8;
}

.pager {
    width: 131px;
    height: 37px;
    display: flex;
    background: #d6d6d6;
    border: 1px solid #c4c4c4;
    border-radius: 6px;
    overflow: hidden;
}

.pager-btn {
    width: 43px;
    display: flex;
    align-items: center;
    justify-content: center;
    border-right: 1px solid #c0c0c0;
}

.pager-num {
    flex: 1;
    background: #fff;
    color: #444;
    font-size: 16px;
    line-height: 35px;
    text-align: center;
}

.head-gear {
    width: 40px;
    height: 37px;
    display: flex;
    align-items: center;
    justify-content: center;
    border: 1px solid #ddd;
    border-radius: 6px;
    color: #888;
}

.head-gap {
    width: 43px;
    flex: none;
}

.head-gap.narrow {
    width: 42px;
}

.provider {
    margin-top: 23px;
    height: 71px;
    padding: 5px 0 0 15px;
    border-radius: 3px 3px 0 0;
    color: #fff;
    position: relative;
    flex: none;
}

.luna {
    width: 299px;
    background: #2b1ec8;
    border-top: 2px solid #1a1270;
}

.harry {
    width: 299px;
    background: #00ad85;
    border-top: 2px solid #0a8a6b;
}

.prov-name {
    font-size: 20px;
    line-height: 28px;
}

.prov-sub {
    margin-top: 5px;
    font-size: 15px;
    opacity: .8;
}

.prov-gear {
    position: absolute;
    right: 15px;
    top: 7px;
    width: 40px;
    height: 37px;
    display: flex;
    align-items: center;
    justify-content: center;
    border: 1px solid rgba(0, 0, 0, .05);
    border-radius: 5px;
    color: rgba(0, 0, 0, .55);
}

/* schedule grid */
.grid {
    border-right: 2px solid #d4d4d4;
    background: #fff;
}

.spacer {
    height: 23px;
    background: #d0d0d0;
    border-top: 2px solid #c8c8c8;
}

.hour {
    height: 190px;
    display: flex;
    border-bottom: 3px solid #bdb8b8;
    background: #fff;
}

.hour.h3 {
    height: 95px;
}

.hour.lunch {
    height: 127px;
    border-bottom: none;
}

.hour-num {
    width: 30px;
    flex: none;
    padding: 0 0 0 19px;
    align-self: center;
    font-size: 22px;
    color: #222;
    white-space: nowrap;
}

.rows {
    flex: 1;
    display: flex;
    flex-direction: column;
}

.row {
    flex: 1;
    min-height: 0;
    display: grid;
    grid-template-columns: 49px 299px 298px 299px 43px 299px 42px 299px 40px;
}

.hour.lunch .row {
    flex: none;
    height: 31.667px;
}

.min {
    padding-right: 8px;
    font-size: 16px;
    line-height: 30px;
    text-align: right;
    color: #b33a32;
}

.lunch .min {
    color: #aaa;
}

.lunch .hour-num {
    font-weight: 700;
}

.cell {
    display: flex;
    align-items: center;
    min-width: 0;
    background: #fdf1f1;
    border-right: 2px solid #efe4e4;
    border-bottom: 2px solid #ebe2e2;
    font-size: 18px;
    color: #111;
}

.cell.off {
    background: #d0d0d0;
    border-right-color: #bfbfbf;
    border-bottom: none;
}

.cell.held {
    background: #fdf0c6;
    border-right: none;
    border-bottom-color: #e8dfc0;
}

.cell.blocked {
    background: #e38181;
    border-right: none;
    border-bottom: none;
}

.cell.alt {
    background: #f7f7f7;
    border-color: #e7e7e7;
}

.cell.plain {
    background: #fff;
    border-color: #e7e7e7;
}

.cell.appt {
    background: #bde0fd;
    border-right: none;
    border-bottom-color: #a8c9e6;
    padding-left: 6px;
}

.cell.black {
    background: #000;
    border-bottom-color: #000;
}

.bar {
    width: 7px;
    height: 100%;
    margin-left: -5px;
    margin-right: 5px;
    background: #6c0a78;
    flex: none;
}

.name {
    flex: 1;
    padding-top: 1px;
    font-weight: 700;
    white-space: nowrap;
}

.flag-icon {
    margin-right: 4px;
    flex: none;
    color: #111;
}

.es-icon {
    margin: -6px 4px 0 0;
    flex: none;
}

.drop {
    width: 37px;
    height: 100%;
    flex: none;
    display: flex;
    align-items: center;
    justify-content: center;
    background: #d2eafd;
}

.drop .caret {
    border-left-width: 6px;
    border-right-width: 6px;
    border-top-width: 8px;
    border-top-color: #111;
}

.cell.black .drop {
    background: #444;
}

.n {
    background: #fff;
    border-right: 1px solid #eee;
    border-bottom: 2px solid #eaeaea;
    color: #888;
    font-size: 15px;
    line-height: 30px;
    text-align: center;
}

.n.on {
    color: #111;
    font-weight: 700;
}

.n.hot {
    background: #f5504a;
    color: #fff;
    font-weight: 700;
}

.scrollbar {
    margin-left: 22px;
    width: 14px;
}

.thumb {
    width: 10px;
    height: 615px;
    border-radius: 5px;
    background: #9a9a9a;
}

/* overlays */
.menu {
    position: absolute;
    left: 653px;
    top: 0;
    width: 281px;
    list-style: none;
    background: #fff;
    border-radius: 0 0 6px 6px;
    box-shadow: 0 6px 18px rgba(0, 0, 0, .3);
    font-size: 20px;
    color: #333;
}

.menu li {
    height: 51.4px;
    padding-left: 22px;
    line-height: 51px;
    white-space: nowrap;
}

.menu li.hover {
    background: #f0f0f0;
}

.pointer {
    position: absolute;
    left: 729px;
    top: 342px;
}

.chat {
    position: absolute;
    left: 2285px;
    top: 1120px;
    width: 86px;
    height: 86px;
    display: flex;
    align-items: center;
    justify-content: center;
    border-radius: 50%;
    background: #0569bd;
    box-shadow: 0 2px 8px rgba(0, 0, 0, .25);
}

/* bottom alert bar */
.alerts {
    height: 57px;
    flex: none;
    display: flex;
    background: #686868;
    border-top: 2px solid #4a4a4a;
    color: #fff;
    font-size: 17px;
}

.alert {
    display: flex;
    align-items: center;
    flex: none;
    border-right: 1px solid #333;
    padding: 0 14px;
}

.a-one { width: 565px; justify-content: space-between; }
.a-two { width: 564px; justify-content: space-between; }
.a-three { width: 564px; padding-left: 15px; gap: 5px; }
.a-four { width: 563px; padding: 0 16px; justify-content: space-between; }

.alert-title {
    font-weight: 700;
}

.alert-note {
    font-size: 15.5px;
    color: #e6e6e6;
}

.count {
    width: 30px;
    height: 30px;
    border-radius: 50%;
    font-weight: 700;
    line-height: 30px;
    text-align: center;
}

.count.dark {
    background: #000;
}

.count.pink {
    background: #d81b66;
    border: 1px solid #8c2a50;
    line-height: 28px;
}

.alert-up {
    flex: 1;
    padding: 8px 5px 0 7px;
}

.up-btn {
    height: 40px;
    display: flex;
    align-items: center;
    justify-content: center;
    background: #dcdcdc;
    border-radius: 5px;
}
```
